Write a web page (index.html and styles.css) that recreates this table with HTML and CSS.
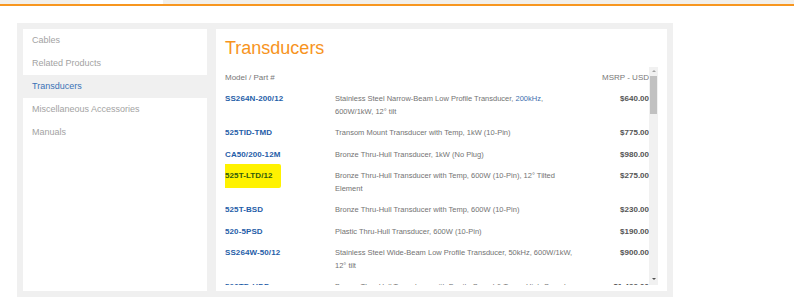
FILE: index.html
```html
<!DOCTYPE html>
<html lang="en">
<head>
<meta charset="utf-8">
<title>Transducers</title>
<link rel="stylesheet" href="styles.css">
</head>
<body>
<header class="topbar">
  <div class="tabs">
    <span class="tab"></span>
    <span class="tab tab-active"></span>
    <span class="tab tab-rest"></span>
  </div>
</header>
<main class="shell">
  <nav class="sidenav">
    <a class="nav-item">Cables</a>
    <a class="nav-item">Related Products</a>
    <a class="nav-item nav-active">Transducers</a>
    <a class="nav-item">Miscellaneous Accessories</a>
    <a class="nav-item">Manuals</a>
  </nav>
  <section class="panel">
    <h1 class="title">Transducers</h1>
    <div class="scroller">
      <div class="list">
        <div class="row row-head">
          <span class="col-part">Model / Part #</span>
          <span class="col-desc"></span>
          <span class="col-price">MSRP - USD</span>
        </div>
        <div class="row">
          <span class="col-part part">SS264N-200/12</span>
          <span class="col-desc">Stainless Steel Narrow-Beam Low Profile Transducer, <span class="link">200kHz</span>, 600W/1kW, 12° tilt</span>
          <span class="col-price price">$640.00</span>
        </div>
        <div class="row">
          <span class="col-part part">525TID-TMD</span>
          <span class="col-desc">Transom Mount Transducer with Temp, 1kW (10-Pin)</span>
          <span class="col-price price">$775.00</span>
        </div>
        <div class="row">
          <span class="col-part part">CA50/200-12M</span>
          <span class="col-desc">Bronze Thru-Hull Transducer, 1kW (No Plug)</span>
          <span class="col-price price">$980.00</span>
        </div>
        <div class="row">
          <span class="col-part part"><span class="marker">525T-LTD/12</span></span>
          <span class="col-desc">Bronze Thru-Hull Transducer with Temp, 600W (10-Pin), 12° Tilted Element</span>
          <span class="col-price price">$275.00</span>
        </div>
        <div class="row">
          <span class="col-part part">525T-BSD</span>
          <span class="col-desc">Bronze Thru-Hull Transducer with Temp, 600W (10-Pin)</span>
          <span class="col-price price">$230.00</span>
        </div>
        <div class="row">
          <span class="col-part part">520-5PSD</span>
          <span class="col-desc">Plastic Thru-Hull Transducer, 600W (10-Pin)</span>
          <span class="col-price price">$190.00</span>
        </div>
        <div class="row">
          <span class="col-part part">SS264W-50/12</span>
          <span class="col-desc">Stainless Steel Wide-Beam Low Profile Transducer, 50kHz, 600W/1kW, 12° tilt</span>
          <span class="col-price price">$900.00</span>
        </div>
        <div class="row">
          <span class="col-part part">526TD-HDD</span>
          <span class="col-desc">Bronze Thru-Hull Transducer with Depth, Speed &amp; Temp, High-Speed Fairing</span>
          <span class="col-price price">$1,499.00</span>
        </div>
      </div>
      <div class="scrollbar">
        <span class="arrow arrow-up"></span>
        <span class="thumb"></span>
        <span class="track-fill"></span>
        <span class="arrow arrow-down"></span>
      </div>
    </div>
  </section>
</main>
</body>
</html>
```

FILE: styles.css
```css
* { box-sizing: border-box; }

html, body {
  margin: 0;
  padding: 0;
  background: #ffffff;
  font-family: "Liberation Sans", Arial, sans-serif;
  overflow: hidden;
}

.topbar {
  height: 6px;
  background: #f2efea;
  border-bottom: 2px solid #f7961f;
}

.tabs {
  display: flex;
  height: 4px;
}

.tab { width: 80px; }
.tab-active { width: 83px; background: #ffffff; }
.tab-rest { flex: 1; }

.shell {
  display: flex;
  gap: 9px;
  width: 656px;
  height: 274px;
  margin: 17px 0 0 17px;
  padding: 6px;
  background: #f0f0f0;
}

.sidenav {
  display: flex;
  flex-direction: column;
  width: 184px;
  background: #ffffff;
}

.nav-item {
  display: block;
  height: 23px;
  line-height: 23px;
  padding-left: 9px;
  font-size: 9px;
  color: #a3a3a3;
  text-decoration: none;
}

.nav-active {
  background: #f0f0f0;
  color: #3a72b6;
}

.panel {
  flex: 1;
  display: flex;
  flex-direction: column;
  background: #ffffff;
  padding: 9px 9px 6px 9px;
}

.title {
  margin: 0 0 8px 0;
  font-size: 18px;
  line-height: 21px;
  font-weight: normal;
  color: #f7941d;
}

.scroller {
  display: flex;
  height: 218px;
  overflow: hidden;
}

.list {
  flex: 1;
  overflow: hidden;
}

.row {
  display: grid;
  grid-template-columns: 110px 242px 1fr;
  padding: 4.5px 0;
  line-height: 12.5px;
}

.col-part { font-size: 8px; }
.col-desc { font-size: 7.5px; color: #737373; }
.col-price { font-size: 8px; text-align: right; }

.row-head .col-part,
.row-head .col-price {
  color: #777777;
}

.part {
  font-weight: bold;
  color: #1f5ea8;
  letter-spacing: 0.1px;
}

.link { color: #3d6fae; }

.price {
  font-weight: bold;
  color: #555555;
}

.marker {
  display: inline-block;
  padding: 6px 8px 5.5px 7px;
  margin: -6px -8px -5.5px -7px;
  background: #fff200;
  color: #2f5c0c;
  border-radius: 2px;
}

.scrollbar {
  display: flex;
  flex-direction: column;
  align-items: center;
  width: 9px;
  background: #f1f1f1;
}

.arrow {
  width: 0;
  height: 0;
  border-left: 2px solid transparent;
  border-right: 2px solid transparent;
}

.arrow-up {
  margin-top: 3px;
  margin-bottom: 4px;
  border-bottom: 2px solid #a3a3a3;
}

.arrow-down {
  margin-bottom: 5px;
  margin-top: 3px;
  border-top: 2px solid #505050;
}

.thumb {
  width: 7px;
  height: 38px;
  background: #c1c1c1;
}

.track-fill { flex: 1; }
```
